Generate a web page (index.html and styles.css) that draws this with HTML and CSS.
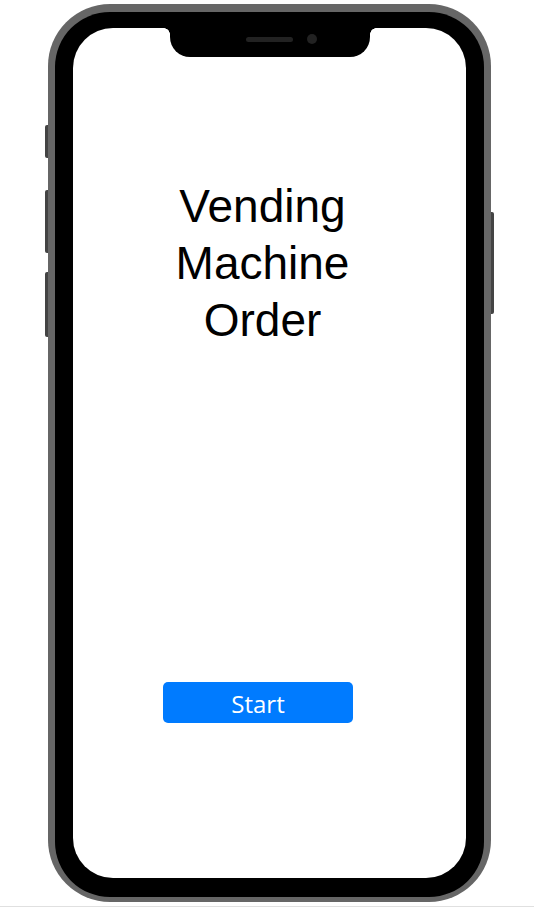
FILE: index.html
```html
<!DOCTYPE html>
<html lang="en">
<head>
<meta charset="utf-8">
<title>Vending Machine Order</title>
<link rel="stylesheet" href="styles.css">
</head>
<body>
<div class="stage">
  <div class="phone">
    <span class="side-btn side-btn--mute"></span>
    <span class="side-btn side-btn--vol-up"></span>
    <span class="side-btn side-btn--vol-down"></span>
    <span class="side-btn side-btn--power"></span>
    <div class="bezel">
      <div class="screen">
        <div class="notch">
          <span class="speaker"></span>
          <span class="camera"></span>
        </div>
        <div class="content">
          <h1 class="title">Vending<br>Machine<br>Order</h1>
          <button class="start-btn" type="button">Start</button>
        </div>
      </div>
    </div>
  </div>
</div>
<div class="rule"></div>
</body>
</html>
```

FILE: styles.css
```css
html, body {
  margin: 0;
  padding: 0;
  background: #ffffff;
}

.stage {
  padding: 4px 0 0 48px;
}

.phone {
  position: relative;
  width: 443px;
  box-sizing: border-box;
  padding: 8px 7px 5px 7px;
  background: #666666;
  border-radius: 62px;
}

.bezel {
  background: #000000;
  border-radius: 55px;
  padding: 16px 18px 19px 18px;
}

.screen {
  position: relative;
  height: 850px;
  background: #ffffff;
  border-radius: 40px;
}

.notch {
  position: absolute;
  top: 0;
  left: 97px;
  width: 200px;
  height: 29px;
  background: #000000;
  border-radius: 0 0 20px 20px;
}

.notch::before,
.notch::after {
  content: "";
  position: absolute;
  top: 0;
  width: 6px;
  height: 6px;
}

.notch::before {
  left: -6px;
  background: radial-gradient(circle at 0 100%, transparent 5.5px, #000 6px);
}

.notch::after {
  right: -6px;
  background: radial-gradient(circle at 100% 100%, transparent 5.5px, #000 6px);
}

.speaker {
  position: absolute;
  left: 76px;
  top: 9px;
  width: 47px;
  height: 5px;
  border-radius: 3px;
  background: #222222;
}

.camera {
  position: absolute;
  left: 137px;
  top: 6px;
  width: 10px;
  height: 10px;
  border-radius: 50%;
  background: #222222;
}

.side-btn {
  position: absolute;
  width: 3px;
  background: #444444;
}

.side-btn--mute {
  left: -3px;
  top: 121px;
  height: 33px;
  border-radius: 2px 0 0 2px;
}

.side-btn--vol-up {
  left: -3px;
  top: 186px;
  height: 63px;
  border-radius: 2px 0 0 2px;
}

.side-btn--vol-down {
  left: -3px;
  top: 268px;
  height: 65px;
  border-radius: 2px 0 0 2px;
}

.side-btn--power {
  right: -3px;
  top: 208px;
  height: 102px;
  border-radius: 0 2px 2px 0;
}

.content {
  display: flex;
  flex-direction: column;
  align-items: center;
  padding-top: 150px;
}

.title {
  margin: 0;
  padding-right: 14px;
  font-family: "Liberation Sans", Arial, sans-serif;
  font-weight: normal;
  font-size: 46px;
  line-height: 57px;
  text-align: center;
  color: #000000;
}

.start-btn {
  margin: 333px 23px 0 0;
  width: 190px;
  height: 41px;
  padding: 0;
  border: none;
  border-radius: 5px;
  background: #007bff;
  color: #ffffff;
  font-family: "Open Sans", "Noto Sans", sans-serif;
  font-size: 24px;
  line-height: 44px;
  cursor: pointer;
}

.rule {
  margin-top: 4px;
  height: 1px;
  background: #e0e0e0;
}
```
